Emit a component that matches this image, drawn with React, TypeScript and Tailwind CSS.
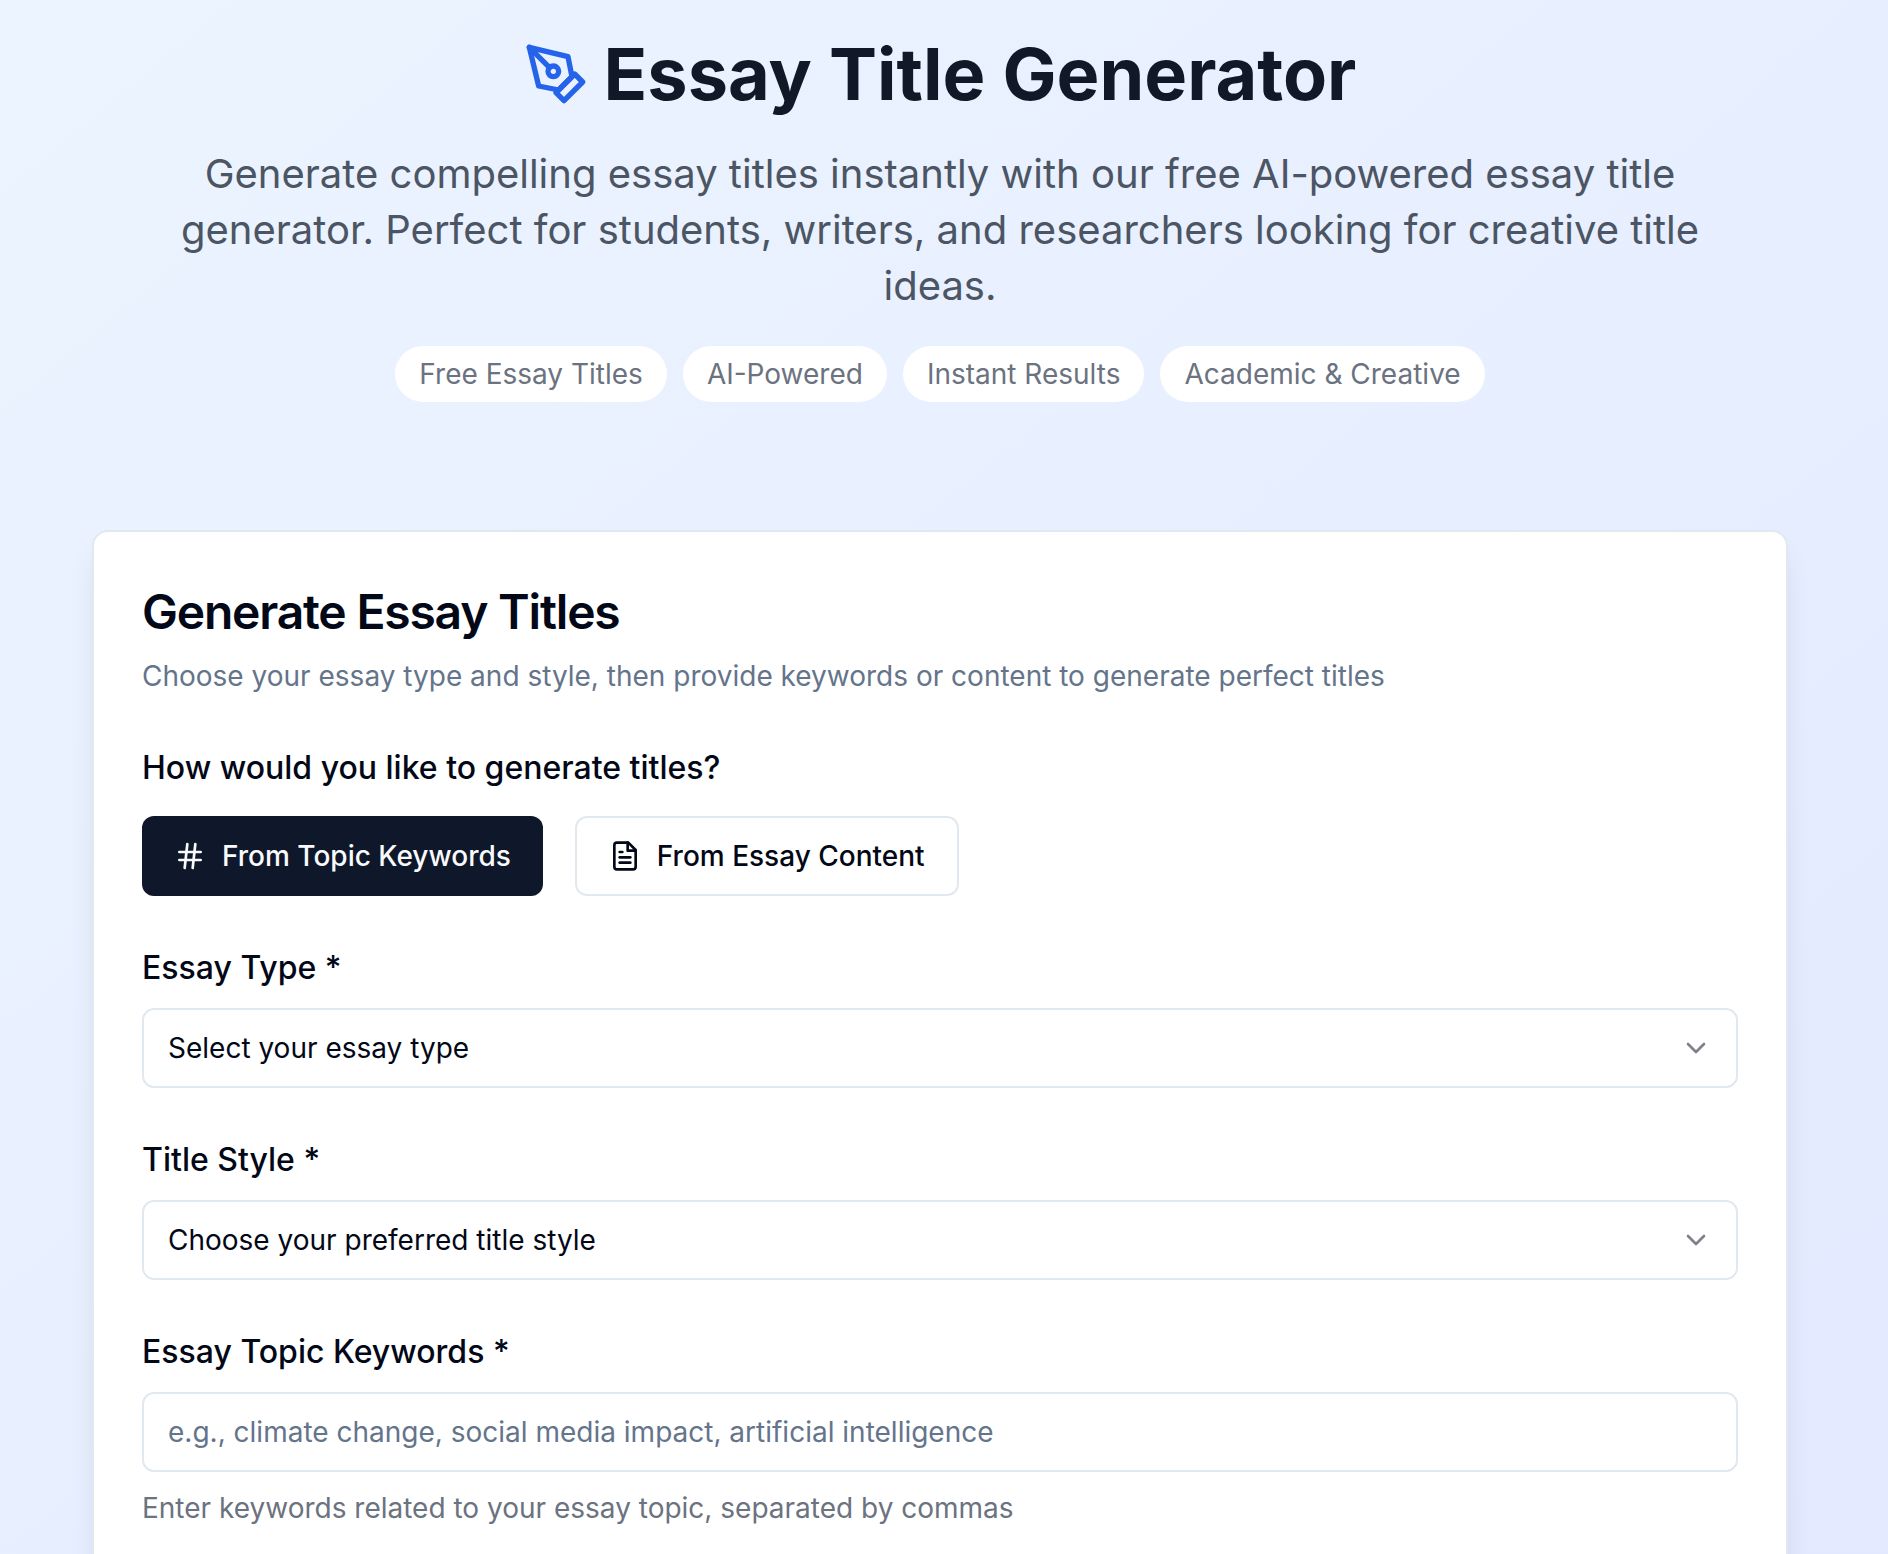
import { useState } from "react";
import type { ReactNode } from "react";
import { ChevronDown, Hash } from "lucide-react";

const features = ["Free Essay Titles", "AI-Powered", "Instant Results", "Academic & Creative"];

const essayTypes = ["Argumentative", "Expository", "Narrative", "Descriptive"];
const titleStyles = ["Academic", "Creative", "Question", "Direct"];

function PenIcon() {
  return (
    <svg
      viewBox="0 0 24 24"
      fill="none"
      stroke="currentColor"
      strokeWidth="2"
      strokeLinecap="round"
      strokeLinejoin="round"
      aria-hidden="true"
      className="size-16 shrink-0 text-[#2563eb]"
    >
      <path d="m12 19 7-7 3 3-7 7-3-3z" />
      <path d="m18 13-1.5-7.5L2 2l3.5 14.5L13 18l5-5z" />
      <path d="m2 2 7.586 7.586" />
      <circle cx="11" cy="11" r="2" />
    </svg>
  );
}

function FileIcon() {
  return (
    <svg
      viewBox="0 0 24 24"
      fill="none"
      stroke="currentColor"
      strokeWidth="2"
      strokeLinecap="round"
      strokeLinejoin="round"
      aria-hidden="true"
      className="size-8 shrink-0"
    >
      <path d="M14.5 2H6a2 2 0 0 0-2 2v16a2 2 0 0 0 2 2h12a2 2 0 0 0 2-2V7.5L14.5 2z" />
      <path d="M14 2v6h6" />
      <path d="M16 13H8" />
      <path d="M16 17H8" />
      <path d="M10 9H8" />
    </svg>
  );
}

function Field({ id, label, children }: { id: string; label: string; children: ReactNode }) {
  return (
    <div className="flex flex-col gap-4">
      <label htmlFor={id} className="text-[32px] leading-12 font-medium">
        {label}
      </label>
      {children}
    </div>
  );
}

function SelectBox({ id, placeholder, options }: { id: string; placeholder: string; options: string[] }) {
  return (
    <div className="relative">
      <select
        id={id}
        defaultValue=""
        className="h-20 w-full appearance-none rounded-xl border-2 border-[#e2e8f0] bg-white pr-20 pl-6 text-[28px] leading-10"
      >
        <option value="">{placeholder}</option>
        {options.map((option) => (
          <option key={option}>{option}</option>
        ))}
      </select>
      <ChevronDown className="pointer-events-none absolute inset-y-0 right-[26px] my-auto size-8 opacity-50" />
    </div>
  );
}

export default function App() {
  const [mode, setMode] = useState("keywords");
  const base = "flex h-20 items-center gap-4 rounded-xl text-[28px] leading-10 font-medium";
  const active = "bg-[#0f172a] px-8 text-[#f8fafc]";
  const idle = "border-2 border-[#e2e8f0] bg-white px-8";

  return (
    <div className="min-h-screen bg-linear-to-br/srgb from-[#ecf4ff] to-[#e3e9ff] pt-[34px] pr-10 pl-8 font-['Inter',sans-serif] text-[#020817]">
      <div className="mx-auto max-w-[1696px]">
        <header className="mb-32 flex flex-col items-center gap-8 text-center">
          <h1 className="flex items-center gap-4 text-[72px] leading-20 font-bold text-[#111827]">
            <PenIcon />
            Essay Title Generator
          </h1>
          <p className="max-w-[1536px] text-[40px] leading-14 text-[#4b5563]">
            Generate compelling essay titles instantly with our free AI-powered essay title generator. Perfect for
            students, writers, and researchers looking for creative title ideas.
          </p>
          <ul className="flex flex-wrap justify-center gap-4 text-[28px] leading-10 text-[#6b7280]">
            {features.map((feature) => (
              <li key={feature} className="rounded-full bg-white px-6 py-2">
                {feature}
              </li>
            ))}
          </ul>
        </header>

        <main className="flex flex-col gap-12 rounded-2xl border-2 border-[#e2e8f0] bg-white p-12 shadow-[0_20px_30px_-6px_rgb(0_0_0/0.1),0_8px_12px_-8px_rgb(0_0_0/0.1)]">
          <div className="flex flex-col gap-3">
            <h2 className="text-[48px] leading-16 font-semibold tracking-tight">Generate Essay Titles</h2>
            <p className="text-[28px] leading-10 text-[#64748b]">
              Choose your essay type and style, then provide keywords or content to generate perfect titles
            </p>
          </div>

          <div role="group" aria-labelledby="mode-label" className="flex flex-col gap-6">
            <span id="mode-label" className="text-[32px] leading-12 font-medium">
              How would you like to generate titles?
            </span>
            <div className="flex flex-wrap gap-8">
              <button
                type="button"
                aria-pressed={mode === "keywords"}
                onClick={() => setMode("keywords")}
                className={`${base} ${mode === "keywords" ? active : idle}`}
              >
                <Hash className="size-8" />
                From Topic Keywords
              </button>
              <button
                type="button"
                aria-pressed={mode === "content"}
                onClick={() => setMode("content")}
                className={`${base} ${mode === "content" ? active : idle}`}
              >
                <FileIcon />
                From Essay Content
              </button>
            </div>
          </div>

          <Field id="essay-type" label="Essay Type *">
            <SelectBox id="essay-type" placeholder="Select your essay type" options={essayTypes} />
          </Field>

          <Field id="title-style" label="Title Style *">
            <SelectBox id="title-style" placeholder="Choose your preferred title style" options={titleStyles} />
          </Field>

          <Field id="keywords" label="Essay Topic Keywords *">
            <input
              id="keywords"
              type="text"
              aria-describedby="keywords-hint"
              placeholder="e.g., climate change, social media impact, artificial intelligence"
              className="h-20 w-full rounded-xl border-2 border-[#e2e8f0] bg-white px-6 text-[28px] leading-10 placeholder:text-[#64748b]"
            />
            <p id="keywords-hint" className="text-[28px] leading-10 text-[#6b7280]">
              Enter keywords related to your essay topic, separated by commas
            </p>
          </Field>
        </main>
      </div>
    </div>
  );
}
